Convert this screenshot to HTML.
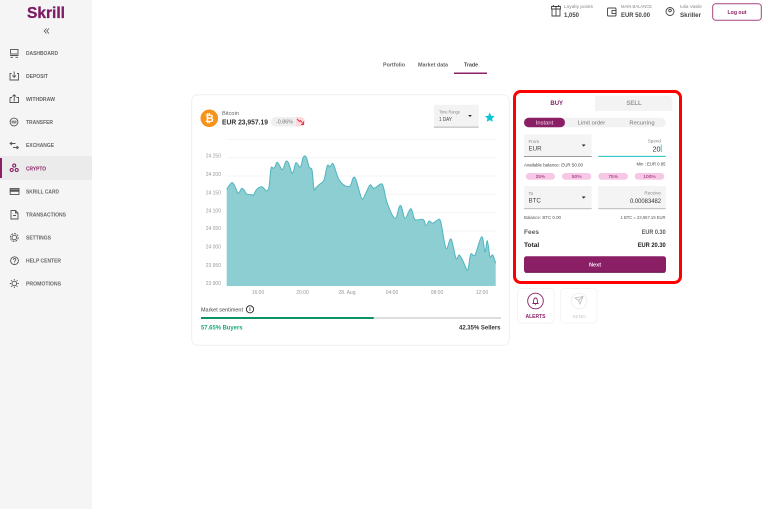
<!DOCTYPE html>
<html><head><meta charset="utf-8"><style>
html,body{margin:0;padding:0;background:#fff;width:765px;height:509px;overflow:hidden}
svg{display:block;filter:blur(.35px)}
text{font-family:"Liberation Sans",sans-serif}
.nav{font-size:5.3px;fill:#666;font-weight:bold}
.ic{fill:none;stroke:#555;stroke-width:.9}
.axis{font-size:5px;fill:#999}
.lab{font-size:4.6px;fill:#888}
.val{font-size:6.2px;fill:#444}
.pct{font-size:4.8px;fill:#8a1f66;text-anchor:middle}
</style></head><body>
<svg width="765" height="509" viewBox="0 0 765 509" xmlns="http://www.w3.org/2000/svg">
<!-- sidebar -->
<rect x="0" y="0" width="92" height="509" fill="#f5f5f5"/>
<rect x="0" y="156" width="92" height="24" fill="#ebebeb"/>
<rect x="0" y="158" width="2" height="20" fill="#8a1f66"/>
<text x="27" y="18" font-size="16" font-weight="bold" fill="#7c1a63" stroke="#7c1a63" stroke-width=".3" textLength="38" lengthAdjust="spacingAndGlyphs">Skrill</text>
<path d="M46.500 28.500l-2.300 2.500 2.300 2.500M49 28.500l-2.300 2.500 2.300 2.500" fill="none" stroke="#555" stroke-width=".8"/>

<g class="ic">
<rect x="10.500" y="49.500" width="7.500" height="4.500"/><path d="M10 55.500h8.500M10.500 57.300h2.500M15.500 57.300h2.500"/>
<path d="M11.500 73.500h-1.500v6.500h8.500v-6.500h-1.500M14.200 71.500v5.500M12.400 75.500l1.800 1.800 1.800-1.800"/>
<path d="M10 97.500v5h8.500v-5h-2M12 97.500h-2M14.200 101.500v-6.500M12.400 96.500l1.800-1.800 1.800 1.800"/>
<circle cx="14" cy="122" r="3.900"/><path d="M11.500 121.200h5M16.500 122.800h-5"/>
<path d="M10 143.500h5.500M12 142l-2 1.500 2 1.500M18.500 147.500h-5.500M16.500 146l2 1.500-2 1.500"/>
<rect x="10.200" y="188.500" width="8.800" height="6"/><rect x="10.200" y="189.800" width="8.800" height="1.500" fill="#555"/>
<path d="M11 210.500h4.500l2.500 2.500v6H11zM15.500 210.500v2.500H18M13 215.500h3"/>
<circle cx="14.300" cy="237.500" r="2.300"/><circle cx="14.300" cy="237.500" r="3.900" stroke-dasharray="2 1"/>
<circle cx="14.500" cy="260.700" r="3.900"/><path d="M13.300 259.800c0-1.800 2.500-1.800 2.500 0 0 .9-1.200.9-1.200 1.900M14.500 262.500v.7"/>
<circle cx="14.300" cy="283.500" r="2.300"/><path d="M14.300 279v1.300M14.300 286.700v1.300M9.800 283.500h1.300M17.500 283.500h1.300M11.100 280.300l.9.900M16.600 285.800l.9.900M17.500 280.300l-.9.900M12 285.800l-.9.900"/>
</g>
<g fill="none" stroke="#8a1f66" stroke-width="1.100"><circle cx="14.200" cy="165.600" r="1.500"/><circle cx="11.700" cy="170" r="1.500"/><circle cx="16.700" cy="170" r="1.500"/></g>

<text class="nav" x="26" y="55" textLength="32" lengthAdjust="spacingAndGlyphs">DASHBOARD</text>
<text class="nav" x="26" y="78" textLength="22" lengthAdjust="spacingAndGlyphs">DEPOSIT</text>
<text class="nav" x="26" y="101" textLength="29" lengthAdjust="spacingAndGlyphs">WITHDRAW</text>
<text class="nav" x="26" y="124" textLength="27" lengthAdjust="spacingAndGlyphs">TRANSFER</text>
<text class="nav" x="26" y="147" textLength="28" lengthAdjust="spacingAndGlyphs">EXCHANGE</text>
<text class="nav" x="26" y="170.300" textLength="20" lengthAdjust="spacingAndGlyphs" style="fill:#8a1f66">CRYPTO</text>
<text class="nav" x="26" y="193.300" textLength="33" lengthAdjust="spacingAndGlyphs">SKRILL CARD</text>
<text class="nav" x="26" y="216.300" textLength="40" lengthAdjust="spacingAndGlyphs">TRANSACTIONS</text>
<text class="nav" x="26" y="239.300" textLength="25" lengthAdjust="spacingAndGlyphs">SETTINGS</text>
<text class="nav" x="26" y="262.300" textLength="35" lengthAdjust="spacingAndGlyphs">HELP CENTER</text>
<text class="nav" x="26" y="285.300" textLength="35" lengthAdjust="spacingAndGlyphs">PROMOTIONS</text>

<!-- header -->
<g fill="none" stroke="#444" stroke-width=".9">
<path d="M552 9h8v7h-8zM551.500 6.500h9V9h-9zM556 6.500V16M554 6.500l-1-1.500M558 6.500l1-1.500"/>
<rect x="607.500" y="8" width="8.500" height="8" rx="1"/><rect x="612" y="10.500" width="4" height="3"/>
<circle cx="670" cy="11.500" r="4"/><circle cx="670" cy="10.500" r="1.300"/>
</g>
<text x="564" y="8" font-size="4.800" fill="#888" textLength="29" lengthAdjust="spacingAndGlyphs">Loyalty points</text>
<text x="564" y="17" font-size="6.600" font-weight="bold" fill="#444" textLength="15" lengthAdjust="spacingAndGlyphs">1,050</text>
<text x="621" y="8" font-size="4.600" fill="#888" textLength="31" lengthAdjust="spacingAndGlyphs">MAIN BALANCE</text>
<text x="621" y="17" font-size="6.600" font-weight="bold" fill="#444" textLength="29" lengthAdjust="spacingAndGlyphs">EUR 50.00</text>
<text x="680" y="8" font-size="4.800" fill="#888" textLength="22" lengthAdjust="spacingAndGlyphs">Iulia Vasile</text>
<text x="680" y="17" font-size="6.600" font-weight="bold" fill="#444" textLength="21" lengthAdjust="spacingAndGlyphs">Skriller</text>
<rect x="712.700" y="3.700" width="48.600" height="16.600" rx="3" fill="#fff" stroke="#a3457f" stroke-width="1"/>
<text x="737" y="13.800" font-size="5.600" font-weight="bold" fill="#8a1f66" text-anchor="middle" textLength="19" lengthAdjust="spacingAndGlyphs">Log out</text>

<!-- tabs -->
<text x="383" y="66.500" font-size="5.600" fill="#666" font-weight="bold" textLength="22" lengthAdjust="spacingAndGlyphs">Portfolio</text>
<text x="418" y="66.500" font-size="5.600" fill="#666" font-weight="bold" textLength="30" lengthAdjust="spacingAndGlyphs">Market data</text>
<text x="464" y="66.500" font-size="5.600" fill="#444" font-weight="bold" textLength="14" lengthAdjust="spacingAndGlyphs">Trade</text>
<rect x="454" y="72.500" width="33" height="1.500" fill="#8a1f66"/>

<!-- main card -->
<rect x="191.700" y="94.700" width="317.600" height="250.600" rx="6" fill="#fff" stroke="#efefef" stroke-width="1"/>
<circle cx="209.300" cy="118.300" r="8.800" fill="#f7931a"/>
<text x="209.300" y="122" font-size="11" font-weight="bold" fill="#fff" text-anchor="middle">₿</text>
<text x="222" y="114.800" font-size="5" fill="#666" textLength="17" lengthAdjust="spacingAndGlyphs">Bitcoin</text>
<text x="222" y="124.500" font-size="7.600" font-weight="bold" fill="#333" textLength="46" lengthAdjust="spacingAndGlyphs">EUR 23,957.19</text>
<rect x="271" y="117" width="34" height="9.500" rx="4.700" fill="#efefef"/>
<path d="M296 117h4.300a4.700 4.700 0 0 1 4.700 4.700a4.700 4.700 0 0 1-4.700 4.800H296z" fill="#fbd9dc"/>
<text x="276" y="123.700" font-size="5" fill="#777" textLength="17" lengthAdjust="spacingAndGlyphs">-0.86%</text>
<path d="M297 119l2.500 2.500 1-1 3 4M303.500 121.500v3h-2.500" fill="none" stroke="#e23b4b" stroke-width="1"/>

<rect x="434" y="104.700" width="44.700" height="23" fill="#f3f3f3"/>
<rect x="434" y="126.500" width="44.700" height="1.300" fill="#c4c4c4"/>
<text x="439" y="113.500" font-size="4.300" fill="#888" textLength="21" lengthAdjust="spacingAndGlyphs">Time Range</text>
<text x="439" y="120.800" font-size="5.600" fill="#444" textLength="13" lengthAdjust="spacingAndGlyphs">1 DAY</text>
<path d="M468.200 115h3.600l-1.800 2z" fill="#222"/>
<path d="M489.700 112.500l1.500 3.200 3.400.4-2.500 2.300.7 3.400-3.100-1.700-3 1.700.7-3.400-2.500-2.300 3.400-.4z" fill="#0cc6d6"/>

<!-- grid -->
<g stroke="#f4f4f4" stroke-width="1">
<path d="M227 139.500h269M227 157.700h269M227 176h269M227 194.300h269M227 212.600h269M227 230.900h269M227 249.200h269M227 267.500h269"/>
</g>
<polygon id="area" fill="#8dced3" stroke="none" points="226.700,286 226.700,189.300 231.700,182.700 234.500,185.500 237.700,192.700 239.500,192 241.700,188.300 244,190 246.700,194 251.700,194.700 253.500,195 256.700,189.300 261.700,186.700 264.500,189 266.700,191 269,187 271,168.300 273.300,168.300 275,167 277.300,162.300 281.700,169.300 283.500,168 286,161.300 288.700,163.300 291.700,172.700 293.500,171 296,162.700 300,167.300 301.500,164 303.300,157.300 306,156.700 309.300,167.300 312,170 314,189.300 316,187.500 320,184 324,180 327.300,165.700 330,166.700 333.300,164 338.300,178.300 344,185 350,186 353.300,177.700 356,180 361.700,198.300 365,195 370,185 374,188.300 380.700,184 383.300,186.700 387.300,203.300 395,218.300 399.300,206.700 401.500,207 405,218.300 410,209.300 412,210.500 415,219.500 423.300,219.500 426,225.700 429.300,221 432.700,223.300 437.300,220.300 440.700,221.700 446,248.300 451,239 456,258.300 459.300,255 463.300,261.700 467.700,270 470.700,254.300 475,255 481.700,236.700 485,251.700 487.300,240.700 490,256.700 492.700,255 495.700,263.300 495.700,286"/>
<polyline id="line" fill="none" stroke="#4fb4bf" stroke-width="1" stroke-linejoin="round" points="226.700,189.300 231.700,182.700 234.500,185.500 237.700,192.700 239.500,192 241.700,188.300 244,190 246.700,194 251.700,194.700 253.500,195 256.700,189.300 261.700,186.700 264.500,189 266.700,191 269,187 271,168.300 273.300,168.300 275,167 277.300,162.300 281.700,169.300 283.500,168 286,161.300 288.700,163.300 291.700,172.700 293.500,171 296,162.700 300,167.300 301.500,164 303.300,157.300 306,156.700 309.300,167.300 312,170 314,189.300 316,187.500 320,184 324,180 327.300,165.700 330,166.700 333.300,164 338.300,178.300 344,185 350,186 353.300,177.700 356,180 361.700,198.300 365,195 370,185 374,188.300 380.700,184 383.300,186.700 387.300,203.300 395,218.300 399.300,206.700 401.500,207 405,218.300 410,209.300 412,210.500 415,219.500 423.300,219.500 426,225.700 429.300,221 432.700,223.300 437.300,220.300 440.700,221.700 446,248.300 451,239 456,258.300 459.300,255 463.300,261.700 467.700,270 470.700,254.300 475,255 481.700,236.700 485,251.700 487.300,240.700 490,256.700 492.700,255 495.700,263.300"/>

<g class="axis" text-anchor="end">
<text x="221" y="157.700">24 250</text><text x="221" y="176">24 200</text><text x="221" y="194.300">24 150</text><text x="221" y="212.600">24 100</text><text x="221" y="230">24 050</text><text x="221" y="248.500">24 000</text><text x="221" y="267">23 950</text><text x="221" y="285">23 900</text>
</g>
<g class="axis" text-anchor="middle">
<text x="258" y="294">16:00</text><text x="302.500" y="294">20:00</text><text x="347" y="294">28. Aug</text><text x="392" y="294">04:00</text><text x="437" y="294">08:00</text><text x="482" y="294">12:00</text>
</g>

<!-- sentiment -->
<text x="201" y="311.500" font-size="5.600" fill="#444" textLength="42" lengthAdjust="spacingAndGlyphs">Market sentiment</text>
<circle cx="250" cy="309.300" r="3.600" fill="none" stroke="#222" stroke-width=".9"/>
<text x="250" y="311.200" font-size="5" font-weight="bold" fill="#222" text-anchor="middle">i</text>
<rect x="201" y="317" width="300" height="2" fill="#dedede"/>
<rect x="201" y="317" width="172.700" height="2" fill="#0a9464"/>
<text x="201" y="329.500" font-size="6.400" font-weight="bold" fill="#1fa57d" textLength="41.500" lengthAdjust="spacingAndGlyphs">57.65% Buyers</text>
<text x="500.500" y="329.500" font-size="6.400" font-weight="bold" fill="#333" text-anchor="end" textLength="41.500" lengthAdjust="spacingAndGlyphs">42.35% Sellers</text>

<!-- trade panel -->
<rect x="514.500" y="91.500" width="166" height="191" rx="6" fill="#fff" stroke="#fe0000" stroke-width="3"/>
<path d="M595 95.700h73.500a4 4 0 0 1 4 4V111H595z" fill="#f3f3f3"/>
<text x="556.700" y="105" font-size="6" font-weight="bold" fill="#8a1f66" text-anchor="middle">BUY</text>
<text x="634" y="105" font-size="6" font-weight="bold" fill="#999" text-anchor="middle">SELL</text>

<rect x="524" y="117.700" width="141.700" height="9.600" rx="4.800" fill="#f2f2f2"/>
<rect x="524" y="117.700" width="41" height="9.600" rx="4.800" fill="#8a1f66"/>
<text x="544.500" y="124.700" font-size="5.800" fill="#f3dcec" text-anchor="middle">Instant</text>
<text x="591.500" y="124.700" font-size="5.800" fill="#777" text-anchor="middle">Limit order</text>
<text x="642" y="124.700" font-size="5.800" fill="#777" text-anchor="middle">Recurring</text>

<rect x="524" y="134.300" width="67.700" height="22.400" fill="#f4f4f4"/>
<rect x="524" y="156" width="67.700" height="1" fill="#9a9a9a"/>
<text x="528.500" y="143" class="lab">From</text>
<text x="528.500" y="150.400" class="val">EUR</text>
<path d="M581.800 144.500h3.800l-1.900 2.100z" fill="#222"/>
<rect x="598.300" y="155.800" width="67.400" height="1.200" fill="#3fc8c8"/>
<text x="661" y="142.500" class="lab" text-anchor="end">Spend</text>
<text x="660.500" y="151.500" font-size="7.200" fill="#333" text-anchor="end">20</text>
<rect x="660.800" y="144.500" width=".8" height="7.500" fill="#2fc0c0"/>

<text x="524" y="166.500" font-size="4.700" fill="#444" textLength="59" lengthAdjust="spacingAndGlyphs">Available balance: EUR 50.00</text>
<text x="665.500" y="165.500" font-size="4.700" fill="#444" text-anchor="end" textLength="29" lengthAdjust="spacingAndGlyphs">Min : EUR 0.85</text>

<g fill="#f7c8e6">
<rect x="525.700" y="173" width="29.300" height="6.700" rx="3.300"/><rect x="562" y="173" width="29.300" height="6.700" rx="3.300"/><rect x="598.300" y="173" width="29.700" height="6.700" rx="3.300"/><rect x="634.700" y="173" width="29.600" height="6.700" rx="3.300"/>
</g>
<text class="pct" x="540.400" y="178.200">25%</text><text class="pct" x="576.700" y="178.200">50%</text><text class="pct" x="613.200" y="178.200">75%</text><text class="pct" x="649.500" y="178.200">100%</text>

<rect x="524" y="186" width="67.700" height="23" fill="#f4f4f4"/>
<rect x="524" y="208" width="67.700" height="1.200" fill="#c4c4c4"/>
<text x="528.500" y="195" class="lab">To</text>
<text x="528.500" y="202.400" class="val">BTC</text>
<path d="M581.800 196.500h3.800l-1.900 2.100z" fill="#222"/>
<rect x="598.300" y="186" width="67.400" height="23" fill="#f4f4f4"/>
<rect x="598.300" y="208" width="67.400" height="1.200" fill="#c4c4c4"/>
<text x="661" y="194.500" class="lab" text-anchor="end">Receive</text>
<text x="661" y="203" font-size="6.400" fill="#333" text-anchor="end" textLength="31" lengthAdjust="spacingAndGlyphs">0.00083482</text>

<text x="524" y="219" font-size="4.700" fill="#555" textLength="37" lengthAdjust="spacingAndGlyphs">Balance: BTC 0.00</text>
<text x="665.500" y="219" font-size="4.700" fill="#555" text-anchor="end" textLength="45" lengthAdjust="spacingAndGlyphs">1 BTC = 23,957.19 EUR</text>

<text x="524" y="233.800" font-size="6.600" fill="#333" font-weight="bold" opacity=".8">Fees</text>
<text x="665.700" y="233.800" font-size="6.400" fill="#333" font-weight="bold" opacity=".8" text-anchor="end" textLength="24" lengthAdjust="spacingAndGlyphs">EUR 0.30</text>
<text x="524" y="246.800" font-size="6.600" font-weight="bold" fill="#222">Total</text>
<text x="665.700" y="246.800" font-size="6.400" font-weight="bold" fill="#222" text-anchor="end" textLength="28" lengthAdjust="spacingAndGlyphs">EUR 20.30</text>

<rect x="524" y="256.300" width="142" height="16.400" rx="2.500" fill="#8a1f66"/>
<rect x="525" y="271.800" width="140" height=".9" fill="#5e1246"/>
<text x="595" y="266.500" font-size="5.600" font-weight="bold" fill="#f6e6f0" text-anchor="middle">Next</text>

<!-- action cards -->
<rect x="517.500" y="288.500" width="36.500" height="34.500" rx="4" fill="#fff" stroke="#f3f3f3"/>
<rect x="560.500" y="288.500" width="36.500" height="34.500" rx="4" fill="#fff" stroke="#f5f5f5"/>
<circle cx="535.500" cy="301" r="7.800" fill="none" stroke="#8a1f66" stroke-width=".9"/>
<path d="M533 303.500c.8-1 .5-2.500.7-3.500.2-1.300 1-2 1.800-2s1.600.7 1.800 2c.2 1 -.1 2.500.7 3.500zM535 304.800h1" fill="none" stroke="#8a1f66" stroke-width=".9"/>
<text x="535.500" y="318" font-size="5" font-weight="bold" fill="#8a1f66" text-anchor="middle">ALERTS</text>
<circle cx="579" cy="301" r="7.800" fill="#fff" stroke="#eeeeee" stroke-width=".9"/>
<path d="M575 298l8-1.500-3 7.500-1.300-3.500zM578.700 300.500l4.300-4" fill="none" stroke="#bbb" stroke-width=".8"/>
<text x="579" y="318" font-size="4.800" fill="#c8c8c8" text-anchor="middle">SEND</text>
</svg>
<script>
(function(){
var l=document.getElementById('line'),a=document.getElementById('area');
var p=l.getAttribute('points').trim().split(/\s+/).map(function(s){return s.split(',').map(Number)});
var d='M'+p[0][0]+' '+p[0][1];
for(var i=0;i<p.length-1;i++){
var p0=p[i-1]||p[i],p1=p[i],p2=p[i+1],p3=p[i+2]||p2;
d+=' C'+(p1[0]+(p2[0]-p0[0])/6).toFixed(2)+' '+(p1[1]+(p2[1]-p0[1])/6).toFixed(2)+' '+(p2[0]-(p3[0]-p1[0])/6).toFixed(2)+' '+(p2[1]-(p3[1]-p1[1])/6).toFixed(2)+' '+p2[0]+' '+p2[1];
}
var ns='http://www.w3.org/2000/svg';
var pa=document.createElementNS(ns,'path');pa.setAttribute('d',d+' L495.700 286 L226.700 286 Z');pa.setAttribute('fill','#8dced3');
var pl=document.createElementNS(ns,'path');pl.setAttribute('d',d);pl.setAttribute('fill','none');pl.setAttribute('stroke','#4fb4bf');pl.setAttribute('stroke-width','1');
a.parentNode.replaceChild(pa,a);l.parentNode.replaceChild(pl,l);
})();
</script>
</body></html>
